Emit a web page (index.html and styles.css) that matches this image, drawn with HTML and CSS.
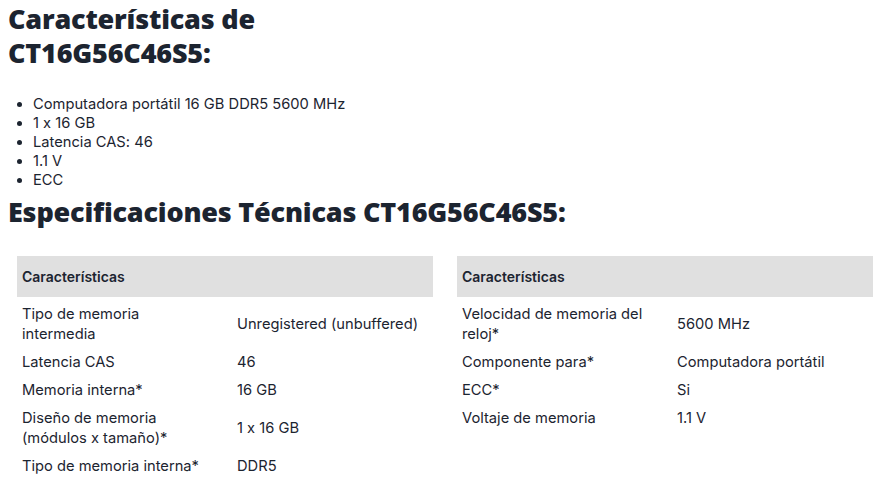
FILE: index.html
```html
<!DOCTYPE html>
<html lang="es">
<head>
<meta charset="utf-8">
<link rel="stylesheet" href="styles.css">
</head>
<body>
<h1 class="title">Características de<br>CT16G56C46S5:</h1>
<ul class="features">
  <li>Computadora portátil 16 GB DDR5 5600 MHz</li>
  <li>1 x 16 GB</li>
  <li>Latencia CAS: 46</li>
  <li>1.1 V</li>
  <li>ECC</li>
</ul>
<h2 class="subtitle">Especificaciones Técnicas CT16G56C46S5:</h2>
<div class="spec-grid">
  <table class="spec">
    <colgroup><col class="c-lbl"><col></colgroup>
    <thead><tr><th colspan="2">Características</th></tr></thead>
    <tbody>
      <tr><td>Tipo de memoria intermedia</td><td>Unregistered (unbuffered)</td></tr>
      <tr><td>Latencia CAS</td><td>46</td></tr>
      <tr><td>Memoria interna*</td><td>16 GB</td></tr>
      <tr><td>Diseño de memoria (módulos x tamaño)*</td><td>1 x 16 GB</td></tr>
      <tr><td>Tipo de memoria interna*</td><td>DDR5</td></tr>
    </tbody>
  </table>
  <table class="spec">
    <colgroup><col class="c-lbl"><col></colgroup>
    <thead><tr><th colspan="2">Características</th></tr></thead>
    <tbody>
      <tr><td>Velocidad de memoria del reloj*</td><td>5600 MHz</td></tr>
      <tr><td>Componente para*</td><td>Computadora portátil</td></tr>
      <tr><td>ECC*</td><td>Si</td></tr>
      <tr><td>Voltaje de memoria</td><td>1.1 V</td></tr>
    </tbody>
  </table>
</div>
</body>
</html>
```
FILE: styles.css
```css
html, body {
  background: #ffffff;
}
body {
  margin: 0;
  padding: 0 8px;
  font-family: Inter, "Noto Sans", sans-serif;
  font-feature-settings: "calt" 0;
  color: #1c2430;
}
.title,
.subtitle {
  font-family: "Open Sans", "Noto Sans", sans-serif;
  font-size: 27px;
  line-height: 34px;
  font-weight: 800;
  letter-spacing: -0.2px;
}
.title {
  margin: 2px 0 0;
}
.features {
  margin: 25px 0 0;
  padding-left: 25px;
  font-size: 14.7px;
  line-height: 19px;
}
.subtitle {
  margin: 5px 0 0;
}
.spec-grid {
  display: grid;
  grid-template-columns: 1fr 1fr;
  column-gap: 24px;
  padding: 27px 4px 0 9px;
  align-items: start;
}
.spec {
  width: 100%;
  border-collapse: collapse;
  font-size: 14.7px;
  line-height: 20px;
  table-layout: fixed;
}
.spec .c-lbl {
  width: 215px;
}
.spec th {
  background: #e0e0e0;
  text-align: left;
  font-weight: 600;
  font-size: 14px;
  height: 41px;
  padding: 0 5px;
  box-sizing: border-box;
}
.spec td {
  padding: 4px 5px;
  vertical-align: middle;
}
.spec td:first-child {
  padding-right: 28px;
}
.spec tbody tr:first-child td {
  padding-top: 7px;
}
```
